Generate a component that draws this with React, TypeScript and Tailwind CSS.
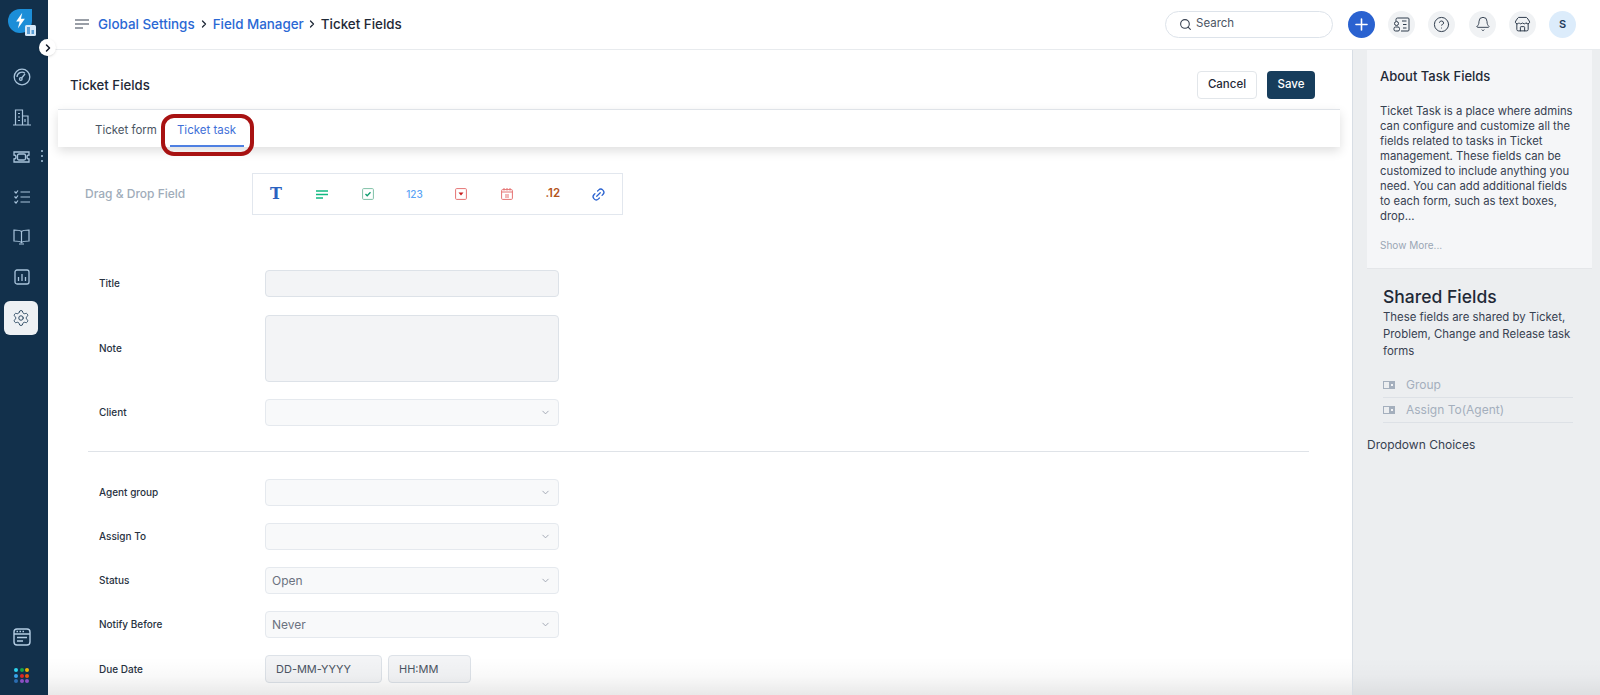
import React from "react";
import { ChevronRight, ChevronDown, Search, Plus, CircleHelp, Bell, Store, Settings, Link2 } from "lucide-react";

const F = { fontFamily: "Inter, 'Liberation Sans', sans-serif" };

function Sel({ value }: { value?: string }) {
  return (
    <div className="flex h-[27px] w-[294px] items-center justify-between rounded-[4px] border border-[#e5e9ee] bg-[#f8f9fa] pl-[6px] pr-[7px] text-[12px] text-[#6b7280]">
      <span>{value}</span>
      <ChevronDown size={11} className="text-[#9ca3af]" />
    </div>
  );
}

function Row({ label, children, className = "" }: { label: string; children: React.ReactNode; className?: string }) {
  return (
    <div className={`flex items-center ${className}`}>
      <div className="w-[217px] shrink-0 whitespace-nowrap pl-[51px] text-[10px] font-medium text-[#283241]">{label}</div>
      {children}
    </div>
  );
}

function Sideicon({ children, className = "" }: { children: React.ReactNode; className?: string }) {
  return <div className={`flex h-[40px] w-full items-center justify-center pr-[5px] text-[#a9c4dc] ${className}`}>{children}</div>;
}

function Shared({ label }: { label: string }) {
  return (
    <div className="flex h-[25px] items-center border-b border-[#dde1e6] text-[12px] text-[#a4afbd]">
      <svg width="12" height="8" viewBox="0 0 12 8" className="mr-[11px]">
        <rect x="0.5" y="0.5" width="11" height="7" fill="none" stroke="#a4afbd" />
        <rect x="6" y="0.5" width="5.5" height="7" fill="#a4afbd" />
        <rect x="8" y="3" width="2" height="2" fill="#f3f4f6" />
      </svg>
      {label}
    </div>
  );
}

export default function App() {
  return (
    <div className="flex h-[695px] w-[1600px] overflow-hidden bg-white" style={F}>
      <aside className="relative flex w-[48px] shrink-0 flex-col items-center bg-[#12304b]">
        <div className="relative ml-[-9px] mt-[9px] h-[24px] w-[24px] rounded-full rounded-tr-[5px] bg-[#1c8ed8]">
          <svg viewBox="0 0 24 24" className="absolute left-[2px] top-[1px] h-[21px] w-[21px]" fill="#fff"><path d="M14 3 7 13h4l-2 8 8-11h-4.500z" /></svg>
          <svg width="11" height="11" viewBox="0 0 11 11" className="absolute -right-[4px] -bottom-[3px]">
            <rect width="11" height="11" rx="1.500" fill="#d6e8f8" />
            <path d="M2 2h3v7H2zM6.500 5h2.500v4H6.500z" fill="#5c9fd6" />
          </svg>
        </div>
        <div className="absolute left-[39px] top-[39px] z-10 flex h-[17px] w-[17px] items-center justify-center rounded-full bg-white shadow">
          <ChevronRight size={12} strokeWidth={3} className="text-[#111827]" />
        </div>
        <div className="mt-[24px] flex w-full flex-col">
          <Sideicon>
            <svg width="18" height="18" viewBox="0 0 18 18" fill="none" stroke="currentColor" strokeWidth="1.300"><circle cx="9" cy="9" r="7.800" /><path d="M4 9a5 5 0 0 1 8-3.800" /><circle cx="7.800" cy="11" r="1.300" /><path d="M8.600 10 12 6" /></svg>
          </Sideicon>
          <Sideicon>
            <svg width="18" height="17" viewBox="0 0 18 17" fill="none" stroke="currentColor" strokeWidth="1.200"><path d="M0 16h18M2.500 16V1h7v15M9.500 7H15v9M5 4.500h2M5 8h2M5 11.500h2M12 10v3" /></svg>
          </Sideicon>
          <Sideicon className="relative">
            <svg width="17" height="12" viewBox="0 0 17 12" fill="none" stroke="currentColor" strokeWidth="1.300"><path d="M1 1h15v3a2 2 0 0 0 0 4v3H1V8a2 2 0 0 0 0-4z" /><rect x="4.500" y="3" width="8" height="6" rx="1.500" /></svg>
            <span className="absolute left-[41px] top-[13px] flex flex-col gap-[3px]">
              <i className="h-[2px] w-[2px] rounded-full bg-[#a9c4dc]" /><i className="h-[2px] w-[2px] rounded-full bg-[#a9c4dc]" /><i className="h-[2px] w-[2px] rounded-full bg-[#a9c4dc]" />
            </span>
          </Sideicon>
          <Sideicon>
            <svg width="16" height="14" viewBox="0 0 16 14" fill="none" stroke="currentColor" strokeWidth="1.200"><path d="M6.500 2H16M6.500 7H16M6.500 12H16M0.500 1.500 2 3 4 .5M0.500 6.500 2 8 4 5.500M0.500 11.500 2 13 4 10.500" /></svg>
          </Sideicon>
          <Sideicon>
            <svg width="17" height="16" viewBox="0 0 17 16" fill="none" stroke="currentColor" strokeWidth="1.200"><path d="M8.500 2.500C7 1.200 4 1 1 1v11c3 0 6 .2 7.500 1.500C10 12.200 13 12 16 12V1c-3 0-6 .2-7.500 1.500zM8.500 2.500v11M6 15h5" /></svg>
          </Sideicon>
          <Sideicon>
            <svg width="16" height="16" viewBox="0 0 16 16" fill="none" stroke="currentColor" strokeWidth="1.300"><rect x="1" y="1" width="14" height="14" rx="2" /><path d="M4.500 12V8M8 12V5M11.500 12V8" /></svg>
          </Sideicon>
          <div className="ml-[4px] mt-[4px] flex h-[34px] w-[34px] items-center justify-center rounded-[6px] bg-[#eef1f4] text-[#2d4a63]">
            <Settings size={18} strokeWidth={1.300} />
          </div>
        </div>
        <div className="mb-[12px] mt-auto flex flex-col items-center gap-[22px] pr-[5px]">
          <svg width="18" height="18" viewBox="0 0 18 18" fill="none" stroke="#b4cde4" strokeWidth="1.400"><rect x="1" y="1" width="16" height="16" rx="3" /><path d="M1 6h16M3.500 3.500h1.500M6.500 3.500h1.500M9.500 3.500h1.500M4 9.500h10M4 13h6" /></svg>
          <div className="grid grid-cols-3 gap-[1.500px]">
            {["#2dd4ee", "#16a34a", "#eab308", "#38a3e8", "#dc2626", "#ea580c", "#2b6cb0", "#8b4fc4", "#8b4fc4"].map((c, i) => (
              <i key={i} className="h-[4px] w-[4px] rounded-full" style={{ background: c }} />
            ))}
          </div>
        </div>
      </aside>

      <div className="flex min-w-0 flex-1 flex-col">
        <header className="flex h-[50px] shrink-0 items-center border-b border-[#e8ebee] pb-[1px] pl-[27px] pr-[24px]">
          <svg width="14" height="10" viewBox="0 0 14 10" stroke="#374151" strokeWidth="1.200"><path d="M0 1h14M0 5h14M0 9h8" /></svg>
          <nav className="ml-[9px] flex items-center text-[13.400px] font-medium">
            <span className="text-[#2a68d4]">Global Settings</span>
            <ChevronRight size={12} strokeWidth={2.500} className="mx-[3px] text-[#1f2937]" />
            <span className="text-[#2a68d4]">Field Manager</span>
            <ChevronRight size={12} strokeWidth={2.500} className="mx-[2.500px] text-[#1f2937]" />
            <span className="text-[#1f2937]">Ticket Fields</span>
          </nav>
          <div className="ml-auto flex h-[27px] w-[168px] items-center rounded-full border border-[#dde3ea] pl-[13px] text-[11.500px] text-[#4b5563]">
            <Search size={13} className="mr-[4px] text-[#374151]" />Search
          </div>
          <div className="ml-[15px] flex h-[27px] w-[27px] items-center justify-center rounded-full bg-[#2a62d0] text-white"><Plus size={19} /></div>
          <div className="ml-[13px] flex h-[27px] w-[27px] items-center justify-center rounded-full bg-[#f0f2f4] text-[#2f3c4c]">
            <svg width="17" height="15" viewBox="0 0 17 15" fill="none" stroke="currentColor" strokeWidth="1"><path d="M3 4V2.500A1.500 1.500 0 0 1 4.500 1H15a1 1 0 0 1 1 1v11a1 1 0 0 1-1 1H8M9 4h4.500M10 7.500h3.500M10 11h3.500" /><circle cx="3.500" cy="6.500" r="2" /><rect x="1" y="10" width="5.500" height="4" rx="1.500" /></svg>
          </div>
          <div className="ml-[13px] flex h-[27px] w-[27px] items-center justify-center rounded-full bg-[#f0f2f4] text-[#2f3c4c]"><CircleHelp size={17} strokeWidth={1.400} /></div>
          <div className="ml-[14px] flex h-[27px] w-[27px] items-center justify-center rounded-full bg-[#f0f2f4] text-[#2f3c4c]"><Bell size={16} strokeWidth={1.400} /></div>
          <div className="ml-[13px] flex h-[27px] w-[27px] items-center justify-center rounded-full bg-[#f0f2f4] text-[#2f3c4c]"><Store size={17} strokeWidth={1.400} /></div>
          <div className="ml-[13px] flex h-[27px] w-[27px] items-center justify-center rounded-full bg-[#dcecfb] text-[11px] font-semibold text-[#1e3a5a]">S</div>
        </header>

        <div className="flex min-h-0 flex-1">
          <main className="relative w-[1304px] min-w-0 shrink-0 overflow-hidden">
            <div className="flex h-[59px] items-center justify-between pl-[22px] pr-[37px] pt-[10px]">
              <h1 className="mt-[3px] text-[13.200px] font-medium text-[#1f2937]">Ticket Fields</h1>
              <div className="flex gap-[10px]">
                <button className="h-[28px] w-[60px] rounded-[4px] border border-[#e2e6ea] text-[11.500px] font-medium text-[#1f2937]">Cancel</button>
                <button className="h-[28px] w-[48px] rounded-[4px] bg-[#173d5c] text-[11.500px] font-medium text-white">Save</button>
              </div>
            </div>
            <div className="ml-[10px] flex h-[38px] w-[1282px] items-stretch border-t border-[#dfe3e8] bg-white pl-[37px] text-[11.500px] shadow-[0_4px_10px_rgba(0,0,0,0.13)]">
              <span className="flex items-center pt-[5px] text-[#4b5563]">Ticket form</span>
              <span className="relative ml-[20px] flex items-center pt-[5px] text-[#3f6fd8]">
                Ticket task
                <i className="absolute -left-[7px] -right-[8px] bottom-0 h-[2px] bg-[#4f80e2]" />
                <i className="absolute -left-[16px] -right-[18px] top-[4px] h-[42px] rounded-[13px] border-[4px] border-[#a81212]" />
              </span>
            </div>

            <div className="mt-[26px] flex items-center pl-[37px]">
              <span className="w-[167px] text-[12px] font-medium text-[#a0acba]">Drag &amp; Drop Field</span>
              <div className="flex h-[42px] w-[371px] items-center border border-[#e2e7ee]">
                {[
                  <span key="t" className="text-[16px] font-black text-[#2a62c0]" style={{ fontFamily: "'DejaVu Serif', serif" }}>T</span>,
                  <svg key="l" width="12" height="9" viewBox="0 0 12 9" stroke="#10b981" strokeWidth="1.300"><path d="M0 1h12M0 4.500h12M0 8h7" /></svg>,
                  <svg key="c" width="12" height="12" viewBox="0 0 12 12" fill="none"><rect x="0.600" y="0.600" width="10.800" height="10.800" rx="1" stroke="#7fc0a6" /><path d="M3.500 6 5.200 7.800 8.500 4.200" stroke="#0f9d6e" strokeWidth="1.300" /></svg>,
                  <span key="n" className="text-[10px] font-medium text-[#5ba4f5]">123</span>,
                  <svg key="d" width="12" height="12" viewBox="0 0 12 12" fill="none"><rect x="0.600" y="0.600" width="10.800" height="10.800" rx="1" stroke="#e57373" /><path d="M3.500 4.500h5L6 7.500z" fill="#c81e1e" /></svg>,
                  <svg key="e" width="12" height="12" viewBox="0 0 12 12" fill="none" stroke="#e57373"><rect x="0.600" y="1.600" width="10.800" height="9.800" rx="1" /><path d="M0.600 4h10.800M3 0v2.500M6 0v2.500M9 0v2.500M4 7h4M4 9h4" /></svg>,
                  <span key="f" className="text-[11.500px] font-semibold text-[#b4541a]">.12</span>,
                  <Link2 key="u" size={15} className="-rotate-45 text-[#2a62d0]" />,
                ].map((x, i) => (
                  <div key={i} className="flex flex-1 items-center justify-center">{x}</div>
                ))}
              </div>
            </div>

            <Row label="Title" className="mt-[55px]">
              <div className="h-[27px] w-[294px] rounded-[4px] border border-[#dde2e8] bg-[#f3f4f6]" />
            </Row>
            <Row label="Note" className="mt-[18px]">
              <div className="h-[67px] w-[294px] rounded-[4px] border border-[#dde2e8] bg-[#f3f4f6]" />
            </Row>
            <Row label="Client" className="mt-[17px]"><Sel /></Row>
            <div className="ml-[40px] mt-[25px] w-[1221px] border-t border-[#dfe3e8]" />
            <Row label="Agent group" className="mt-[27px]"><Sel /></Row>
            <Row label="Assign To" className="mt-[17px]"><Sel /></Row>
            <Row label="Status" className="mt-[17px]"><Sel value="Open" /></Row>
            <Row label="Notify Before" className="mt-[17px]"><Sel value="Never" /></Row>
            <Row label="Due Date" className="mt-[17px]">
              <div className="flex gap-[6px] text-[11px] text-[#4b5563]">
                <div className="flex h-[28px] w-[117px] items-center rounded-[4px] border border-[#dde2e8] bg-[#f3f4f6] pl-[10px]">DD-MM-YYYY</div>
                <div className="flex h-[28px] w-[83px] items-center rounded-[4px] border border-[#dde2e8] bg-[#f3f4f6] pl-[10px]">HH:MM</div>
              </div>
            </Row>
            <div className="pointer-events-none absolute bottom-0 left-0 right-0 h-[38px] bg-gradient-to-b from-transparent via-[#00000006] to-[#00000016]" />
          </main>

          <aside className="relative min-w-0 flex-1 border-l border-[#d8dee5] bg-[#eceef0]">
            <div className="ml-[14px] mr-[8px] h-[219px] border-b border-[#e4e6e9] bg-[#f5f6f8] pl-[13px] pt-[18px]">
              <h2 className="text-[13px] font-medium leading-[16px] text-[#1f2937]">About Task Fields</h2>
              <p className="mt-[20px] w-[198px] text-[11.300px] leading-[15px] text-[#374151]">
                Ticket Task is a place where admins can configure and customize all the fields related to tasks in Ticket management. These fields can be customized to include anything you need. You can add additional fields to each form, such as text boxes, drop...
              </p>
              <p className="mt-[14px] text-[10px] text-[#9aa6b4]">Show More...</p>
            </div>
            <div className="pl-[30px] pr-[27px] pt-[16px]">
              <h2 className="text-[17.500px] font-medium leading-[24px] text-[#1f2937]">Shared Fields</h2>
              <p className="text-[11.400px] leading-[17px] text-[#374151]">These fields are shared by Ticket, Problem, Change and Release task forms</p>
              <div className="mt-[13px]">
                <Shared label="Group" />
                <Shared label="Assign To(Agent)" />
              </div>
            </div>
            <div className="ml-[14px] mt-[13px] text-[12px] text-[#374151]">Dropdown Choices</div>
            <div className="pointer-events-none absolute bottom-0 left-0 right-0 h-[38px] bg-gradient-to-b from-transparent via-[#00000004] to-[#00000010]" />
          </aside>
        </div>
      </div>
    </div>
  );
}
